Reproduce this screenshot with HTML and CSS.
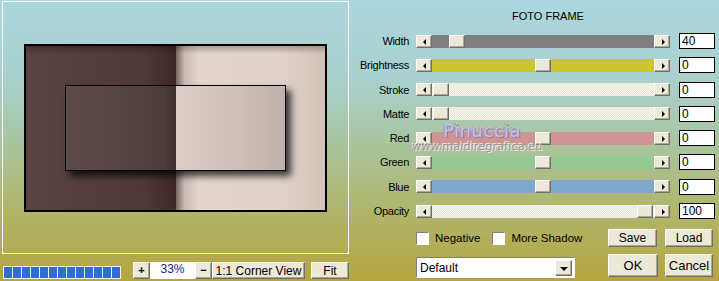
FILE: index.html
```html
<!DOCTYPE html>
<html lang="en">
<head>
    <meta charset="UTF-8">
    <title>Foto Frame</title>
    <link rel="stylesheet" href="styles.css">
</head>
<body>

    <div class="window">
        <div class="left">
            <div class="preview">
                <div class="frame">
                    <div class="photo"></div>
                </div>
            </div>
            <div class="toolbar">
                <div class="progress">
                    <span></span><span></span><span></span><span></span><span></span>
                    <span></span><span></span><span></span><span></span><span></span>
                    <span></span><span></span><span></span>
                </div>
                <button class="btn zoom-btn plus">+</button>
                <div class="zoom-field">33%</div>
                <button class="btn zoom-btn">&minus;</button>
                <button class="btn corner-btn">1:1 Corner View</button>
                <button class="btn fit-btn">Fit</button>
            </div>
        </div>

        <div class="right">
            <div class="title">FOTO FRAME</div>

            <div class="rows">
                <div class="row">
                    <label>Width</label>
                    <div class="slider">
                        <span class="btn arrow arrow-left"></span>
                        <div class="track track-gray"><span class="btn thumb" style="left: 17px"></span></div>
                        <span class="btn arrow arrow-right"></span>
                    </div>
                    <div class="value">40</div>
                </div>
                <div class="row">
                    <label>Brightness</label>
                    <div class="slider">
                        <span class="btn arrow arrow-left"></span>
                        <div class="track track-yellow"><span class="btn thumb" style="left: 103px"></span></div>
                        <span class="btn arrow arrow-right"></span>
                    </div>
                    <div class="value">0</div>
                </div>
                <div class="row">
                    <label>Stroke</label>
                    <div class="slider">
                        <span class="btn arrow arrow-left"></span>
                        <div class="track track-light"><span class="btn thumb" style="left: 1px"></span></div>
                        <span class="btn arrow arrow-right"></span>
                    </div>
                    <div class="value">0</div>
                </div>
                <div class="row">
                    <label>Matte</label>
                    <div class="slider">
                        <span class="btn arrow arrow-left"></span>
                        <div class="track track-light"><span class="btn thumb" style="left: 1px"></span></div>
                        <span class="btn arrow arrow-right"></span>
                    </div>
                    <div class="value">0</div>
                </div>
                <div class="row">
                    <label>Red</label>
                    <div class="slider">
                        <span class="btn arrow arrow-left"></span>
                        <div class="track track-red"><span class="btn thumb" style="left: 103px"></span></div>
                        <span class="btn arrow arrow-right"></span>
                    </div>
                    <div class="value">0</div>
                </div>
                <div class="row">
                    <label>Green</label>
                    <div class="slider">
                        <span class="btn arrow arrow-left"></span>
                        <div class="track track-green"><span class="btn thumb" style="left: 103px"></span></div>
                        <span class="btn arrow arrow-right"></span>
                    </div>
                    <div class="value">0</div>
                </div>
                <div class="row">
                    <label>Blue</label>
                    <div class="slider">
                        <span class="btn arrow arrow-left"></span>
                        <div class="track track-blue"><span class="btn thumb" style="left: 103px"></span></div>
                        <span class="btn arrow arrow-right"></span>
                    </div>
                    <div class="value">0</div>
                </div>
                <div class="row">
                    <label>Opacity</label>
                    <div class="slider">
                        <span class="btn arrow arrow-left"></span>
                        <div class="track track-light"><span class="btn thumb" style="left: 205px"></span></div>
                        <span class="btn arrow arrow-right"></span>
                    </div>
                    <div class="value">100</div>
                </div>
            </div>

            <div class="bottom">
                <div class="checks">
                    <span class="check"><span class="box"></span>Negative</span>
                    <span class="check"><span class="box"></span>More Shadow</span>
                </div>
                <button class="btn action save">Save</button>
                <button class="btn action load">Load</button>
                <div class="select">
                    <span>Default</span>
                    <span class="btn select-arrow"></span>
                </div>
                <button class="btn action big ok">OK</button>
                <button class="btn action big cancel">Cancel</button>
            </div>

            <!-- watermark over the controls -->
            <div class="watermark">
                <div class="wm-name">Pinuccia</div>
                <div class="wm-site">www.maidiregrafica.eu</div>
            </div>
        </div>
    </div>

</body>
</html>
```

FILE: styles.css
```css
body {
    margin: 0;
    font-family: "Liberation Sans", Arial, sans-serif;
    font-size: 11px;
    color: #000;
}
.window {
    display: flex;
    width: 719px;
    height: 281px;
    overflow: hidden;
    background: linear-gradient(#acd6e0 0%, #aad0cc 30%, #a9c49c 52%, #b0b66c 74%, #b5a53f 100%);
}
.left {
    width: 350px;
}
.preview {
    box-sizing: border-box;
    margin: 1px 0 0 2px;
    width: 347px;
    height: 253px;
    border: 1px solid #fff;
    display: flex;
    align-items: center;
    justify-content: center;
}
.frame {
    box-sizing: border-box;
    width: 303px;
    height: 168px;
    border: 2px solid #000;
    display: flex;
    align-items: center;
    justify-content: center;
    background:
        linear-gradient(rgba(0,0,0,0.25), rgba(0,0,0,0) 8px),
        linear-gradient(to right, #584242 0%, #4f3838 40%, #3e2626 50.3%, #7a6a66 50.3%, #c8bab2 53%, #e2d6ce 58%, #e0d2ca 85%, #d2c2ba 100%);
}
.photo {
    box-sizing: border-box;
    width: 221px;
    height: 86px;
    border: 1px solid #000;
    box-shadow: 5px 5px 7px rgba(0, 0, 0, 0.75);
    background: linear-gradient(to right, #5e4c4a 0%, #4c3c3c 45%, #3e2e2e 50.2%, #dccfc7 50.2%, #cfc2ba 75%, #c0b2aa 100%);
}
.toolbar {
    display: flex;
    align-items: flex-end;
    margin-top: 8px;
    height: 17px;
}
.progress {
    display: flex;
    gap: 1px;
    box-sizing: border-box;
    margin-left: 3px;
    width: 118px;
    height: 13px;
    padding: 1px;
    background: #f2f0e4;
}
.progress span {
    flex: 1;
    background: #2f6fd2;
}
.btn {
    box-sizing: border-box;
    font-family: "Liberation Sans", Arial, sans-serif;
    font-size: 11px;
    color: #000;
    background: #ece9d8;
    border: 1px solid;
    border-color: #fff #716f64 #716f64 #fff;
    box-shadow: inset -1px -1px #aca899;
    padding: 0;
}
.zoom-btn {
    width: 17px;
    height: 17px;
    font-weight: bold;
    line-height: 13px;
}
.zoom-btn.plus {
    margin-left: 12px;
}
.zoom-field {
    width: 45px;
    height: 17px;
    background: #fff;
    color: #1a1a8c;
    text-align: center;
    line-height: 15px;
    font-size: 12px;
}
.corner-btn {
    width: 93px;
    height: 17px;
    font-size: 12px;
}
.fit-btn {
    margin-left: 6px;
    width: 38px;
    height: 17px;
    font-size: 12px;
}
.right {
    position: relative;
    flex: 1;
}
.title {
    margin: 10px 0 0 66px;
    width: 264px;
    text-align: center;
    line-height: 13px;
}
.rows {
    margin-top: 10px;
    display: flex;
    flex-direction: column;
    gap: 8.3px;
}
.row {
    display: flex;
    align-items: center;
    height: 16px;
}
.row label {
    width: 59px;
    text-align: right;
    letter-spacing: -0.3px;
}
.slider {
    display: flex;
    margin-left: 7px;
    width: 254px;
    height: 13px;
}
.arrow {
    position: relative;
    width: 16px;
    height: 13px;
}
.arrow::after {
    content: "";
    position: absolute;
    top: 3px;
    left: 6px;
    border: 3px solid transparent;
}
.arrow-left::after {
    left: 3px;
    border-right: 3px solid #000;
}
.arrow-right::after {
    left: 7px;
    border-left: 3px solid #000;
}
.track {
    position: relative;
    flex: 1;
}
.track-gray { background: #808080; }
.track-yellow { background: #cbc62c; }
.track-red { background: #d09494; }
.track-green { background: #94c894; }
.track-blue { background: #80a8cc; }
.track-light {
    background: repeating-conic-gradient(#f8f7ef 0 25%, #e8e5d8 0 50%) 0 0 / 2px 2px;
}
.thumb {
    position: absolute;
    top: 0;
    width: 16px;
    height: 13px;
}
.value {
    box-sizing: border-box;
    margin-left: 9px;
    width: 36px;
    height: 16px;
    padding-left: 2px;
    background: #fff;
    border: 1px solid #000;
    line-height: 14px;
    font-size: 12px;
}
.bottom {
    display: grid;
    grid-template-columns: 159px 33px 50px 7px 48px;
    grid-template-rows: 18px 23px;
    row-gap: 7px;
    margin: 10px 0 0 66px;
}
.checks {
    grid-column: 1 / 3;
    grid-row: 1;
    display: flex;
    align-items: center;
    white-space: nowrap;
    font-size: 11.5px;
}
.check {
    display: flex;
    align-items: center;
    margin-right: 12px;
}
.box {
    box-sizing: border-box;
    width: 13px;
    height: 13px;
    margin-right: 6px;
    background: #fff;
    border: 1px solid;
    border-color: #808080 #fff #fff #808080;
}
.action {
    height: 18px;
    font-size: 12px;
}
.save { grid-column: 3; grid-row: 1; width: 49px; }
.load { grid-column: 5; grid-row: 1; }
.ok { grid-column: 3; grid-row: 2; }
.cancel { grid-column: 5; grid-row: 2; }
.action.big {
    height: 23px;
    font-size: 13px;
}
.select {
    grid-column: 1;
    grid-row: 2;
    box-sizing: border-box;
    display: flex;
    align-items: center;
    justify-content: space-between;
    margin-top: 3px;
    height: 21px;
    padding: 0 2px 0 3px;
    background: #fff;
    border: 1px solid;
    border-color: #808080 #fff #fff #808080;
    font-size: 12px;
}
.select-arrow {
    position: relative;
    width: 17px;
    height: 16px;
}
.select-arrow::after {
    content: "";
    position: absolute;
    top: 6px;
    left: 4px;
    border: 4px solid transparent;
    border-top: 4px solid #000;
}
.watermark {
    position: absolute;
    left: 62px;
    top: 121px;
    pointer-events: none;
}
.wm-name {
    margin-left: 31px;
    font-family: "DejaVu Sans", sans-serif;
    font-size: 18px;
    line-height: 20px;
    letter-spacing: 0.5px;
    color: #ccc2ea;
    text-shadow: 1px 1px 0 #8a7ca8, -1px 0 0 #9e90bc;
}
.wm-site {
    font-family: "DejaVu Sans", sans-serif;
    font-size: 11px;
    line-height: 12px;
    letter-spacing: 0.2px;
    color: #9c9090;
    text-shadow: 1px 1px 0 #f0ecec, -1px -1px 0 #f0ecec;
}
```
